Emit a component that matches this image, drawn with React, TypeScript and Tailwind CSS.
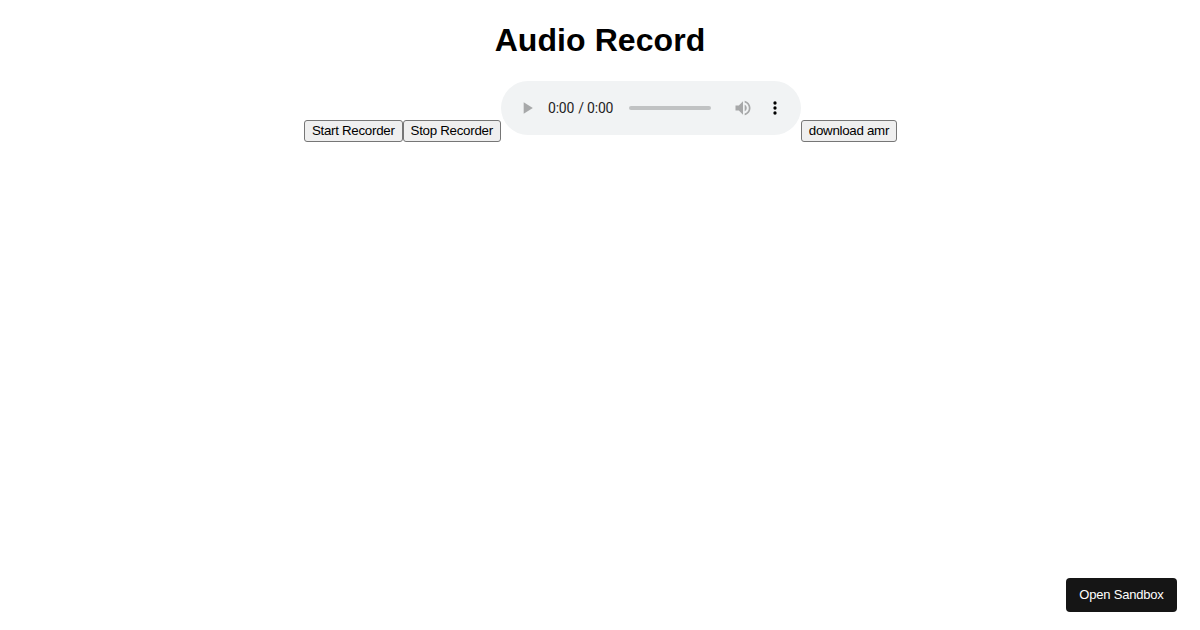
import React from "react";

const btn =
  "inline-block align-baseline border border-[#767676] rounded-[3px] bg-[#efefef] px-[7px] py-[1px] text-[13.3333px] leading-[18px] tracking-[-0.285px] text-black";

const App = () => {
  return (
    <div className="relative w-full h-[630px] overflow-hidden bg-white text-center font-['Liberation_Sans',Arial,sans-serif] text-black">
      {/* Title */}
      <h1 className="pt-[22px] mb-[22px] text-[32px] leading-[37px] font-bold tracking-[0.08px]">Audio Record</h1>

      {/* Recorder controls */}
      <div className="pl-[1px]">
        <button className={btn}>Start Recorder</button>
        <button className={btn}>Stop Recorder</button>
        <audio
          controls
          className="inline-block align-baseline w-[300px] h-[54px] [&::-webkit-media-controls-current-time-display]:tracking-[-0.2px] [&::-webkit-media-controls-time-remaining-display]:tracking-[-0.2px]"
        />
        <button className={btn}>download amr</button>
      </div>

      <button className="absolute right-[23px] bottom-[18px] w-[111px] h-[34px] rounded-[4px] bg-[#151515] text-[13px] tracking-[-0.2px] text-white">
        Open Sandbox
      </button>
    </div>
  );
};

export default App;
